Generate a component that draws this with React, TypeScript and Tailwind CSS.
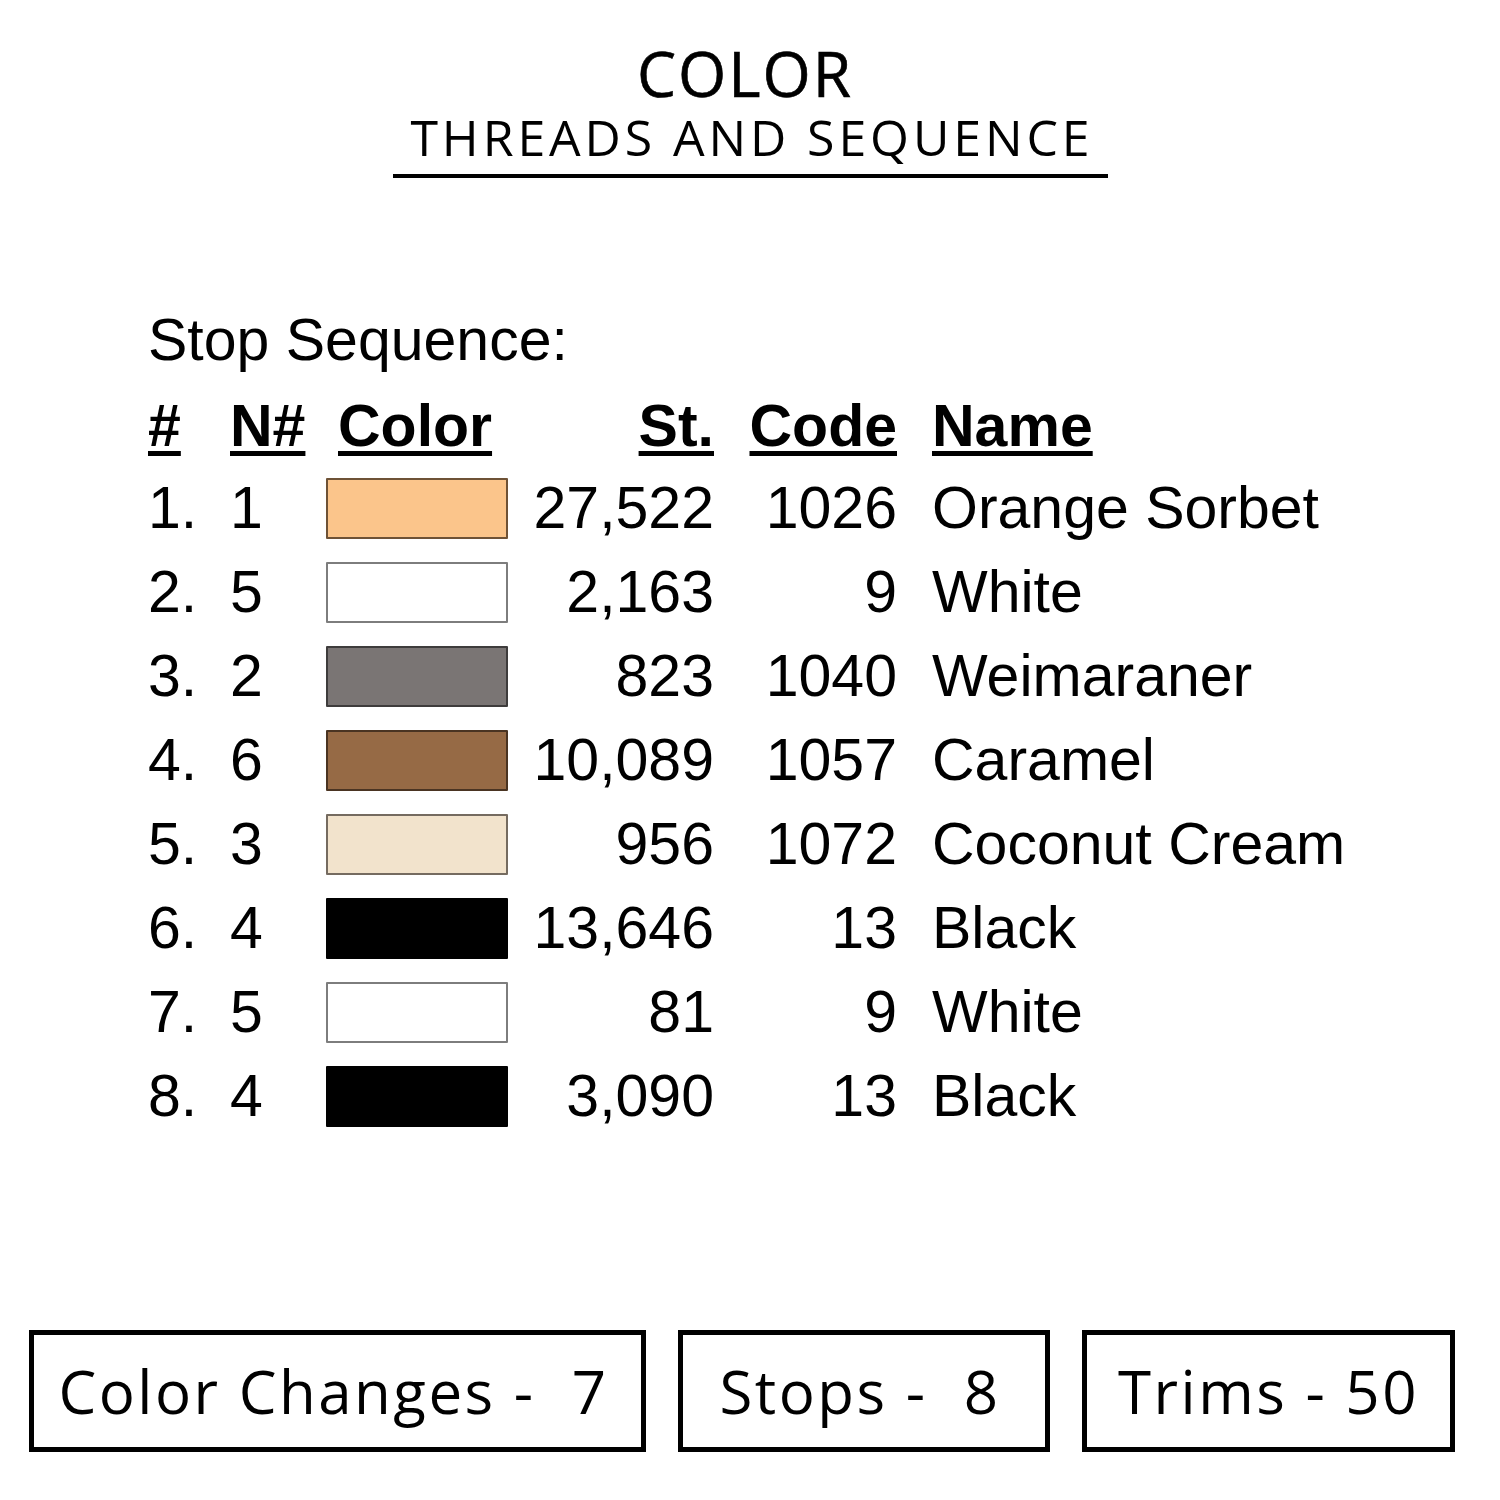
import React from "react";

type Row = {
  n: string;
  nn: string;
  bg: string;
  border: string;
  st: string;
  code: string;
  name: string;
};

const rows: Row[] = [
  { n: "1.", nn: "1", bg: "bg-[#fbc58b]", border: "border-[#6e5236]", st: "27,522", code: "1026", name: "Orange Sorbet" },
  { n: "2.", nn: "5", bg: "bg-white", border: "border-[#7d7d7d]", st: "2,163", code: "9", name: "White" },
  { n: "3.", nn: "2", bg: "bg-[#7a7574]", border: "border-[#3e3c3c]", st: "823", code: "1040", name: "Weimaraner" },
  { n: "4.", nn: "6", bg: "bg-[#966a45]", border: "border-[#4a3422]", st: "10,089", code: "1057", name: "Caramel" },
  { n: "5.", nn: "3", bg: "bg-[#f2e3cc]", border: "border-[#756b60]", st: "956", code: "1072", name: "Coconut Cream" },
  { n: "6.", nn: "4", bg: "bg-black", border: "border-black", st: "13,646", code: "13", name: "Black" },
  { n: "7.", nn: "5", bg: "bg-white", border: "border-[#7d7d7d]", st: "81", code: "9", name: "White" },
  { n: "8.", nn: "4", bg: "bg-black", border: "border-black", st: "3,090", code: "13", name: "Black" },
];

const cols = "grid grid-cols-[82px_96px_182px_206px_183px_1fr]";
const ul = "underline decoration-[5px] underline-offset-[5px]";

export default function App() {
  return (
    <div className="w-[1500px] h-[1500px] bg-white flex flex-col text-black">
      <header className="flex flex-col items-center pt-[41px] font-['Open_Sans',sans-serif]">
        <div className="text-[62px] leading-[64px] font-medium tracking-[2px] pr-[10px] [-webkit-text-stroke:0.6px_black]">COLOR</div>
        <div className="text-[50px] leading-[52px] font-normal tracking-[3.9px] pl-[4px] mt-[6px]">THREADS AND SEQUENCE</div>
        <div className="w-[715px] h-[4px] bg-black mt-[11px]" />
      </header>

      <section className="ml-[148px] mt-[122px] font-['Liberation_Sans',Arial,sans-serif] text-[59px]">
        <div className="h-[80px] leading-[80px] mb-[6px]">Stop Sequence:</div>
        <div className={`${cols} h-[80px] leading-[80px] font-bold`}>
          <div><span className={ul}>#</span></div>
          <div><span className={ul}>N#</span></div>
          <div className="pl-[12px]"><span className={ul}>Color</span></div>
          <div className="text-right"><span className={ul}>St.</span></div>
          <div className="text-right"><span className={ul}>Code</span></div>
          <div className="pl-[35px]"><span className={ul}>Name</span></div>
        </div>
        {rows.map((r, i) => (
          <div key={i} className={`${cols} h-[84px] leading-[84px] items-center`}>
            <div>{r.n}</div>
            <div>{r.nn}</div>
            <div className={`h-[61px] border-2 rounded-[1px] ${r.bg} ${r.border}`} />
            <div className="text-right">{r.st}</div>
            <div className="text-right">{r.code}</div>
            <div className="pl-[35px] whitespace-nowrap">{r.name}</div>
          </div>
        ))}
      </section>

      <footer className="mt-auto mb-[48px] ml-[29px] flex gap-[32px] font-['Open_Sans',sans-serif] text-[60px] tracking-[2.5px]">
        <div className="w-[617px] h-[122px] border-[5px] border-black flex items-center justify-center whitespace-pre pr-[8px]">
          Color Changes -  7
        </div>
        <div className="w-[372px] h-[122px] border-[5px] border-black flex items-center justify-center whitespace-pre pr-[8px]">
          Stops -  8
        </div>
        <div className="w-[373px] h-[122px] border-[5px] border-black flex items-center justify-center whitespace-pre">
          Trims - 50
        </div>
      </footer>
    </div>
  );
}
